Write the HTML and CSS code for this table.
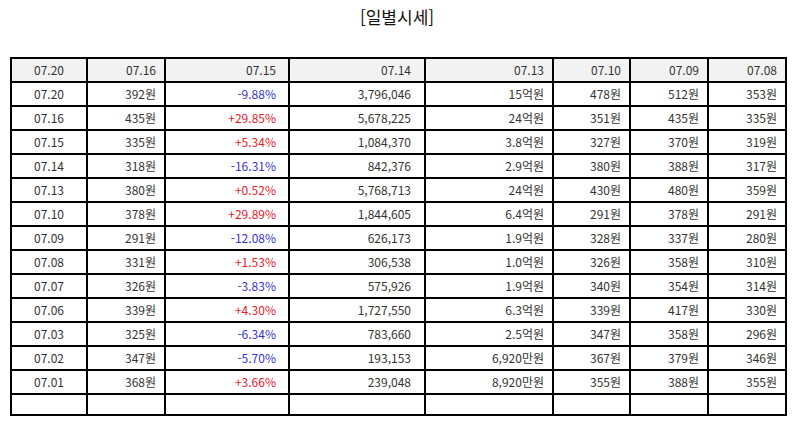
FILE: index.html
```html
<!DOCTYPE html>
<html lang="ko">
<head>
<meta charset="utf-8">
<link rel="stylesheet" href="styles.css">
</head>
<body>
<h2 class="title">[일별시세]</h2>
<table class="grid">
  <colgroup>
    <col class="c1"><col class="c2"><col class="c3"><col class="c4"><col class="c5"><col class="c6"><col class="c7"><col class="c8">
  </colgroup>
  <thead>
    <tr><th>07.20</th><th>07.16</th><th>07.15</th><th>07.14</th><th>07.13</th><th>07.10</th><th>07.09</th><th>07.08</th></tr>
  </thead>
  <tbody>
    <tr><td>07.20</td><td>392원</td><td class="dn">-9.88%</td><td>3,796,046</td><td>15억원</td><td>478원</td><td>512원</td><td>353원</td></tr>
    <tr><td>07.16</td><td>435원</td><td class="up">+29.85%</td><td>5,678,225</td><td>24억원</td><td>351원</td><td>435원</td><td>335원</td></tr>
    <tr><td>07.15</td><td>335원</td><td class="up">+5.34%</td><td>1,084,370</td><td>3.8억원</td><td>327원</td><td>370원</td><td>319원</td></tr>
    <tr><td>07.14</td><td>318원</td><td class="dn">-16.31%</td><td>842,376</td><td>2.9억원</td><td>380원</td><td>388원</td><td>317원</td></tr>
    <tr><td>07.13</td><td>380원</td><td class="up">+0.52%</td><td>5,768,713</td><td>24억원</td><td>430원</td><td>480원</td><td>359원</td></tr>
    <tr><td>07.10</td><td>378원</td><td class="up">+29.89%</td><td>1,844,605</td><td>6.4억원</td><td>291원</td><td>378원</td><td>291원</td></tr>
    <tr><td>07.09</td><td>291원</td><td class="dn">-12.08%</td><td>626,173</td><td>1.9억원</td><td>328원</td><td>337원</td><td>280원</td></tr>
    <tr><td>07.08</td><td>331원</td><td class="up">+1.53%</td><td>306,538</td><td>1.0억원</td><td>326원</td><td>358원</td><td>310원</td></tr>
    <tr><td>07.07</td><td>326원</td><td class="dn">-3.83%</td><td>575,926</td><td>1.9억원</td><td>340원</td><td>354원</td><td>314원</td></tr>
    <tr><td>07.06</td><td>339원</td><td class="up">+4.30%</td><td>1,727,550</td><td>6.3억원</td><td>339원</td><td>417원</td><td>330원</td></tr>
    <tr><td>07.03</td><td>325원</td><td class="dn">-6.34%</td><td>783,660</td><td>2.5억원</td><td>347원</td><td>358원</td><td>296원</td></tr>
    <tr><td>07.02</td><td>347원</td><td class="dn">-5.70%</td><td>193,153</td><td>6,920만원</td><td>367원</td><td>379원</td><td>346원</td></tr>
    <tr><td>07.01</td><td>368원</td><td class="up">+3.66%</td><td>239,048</td><td>8,920만원</td><td>355원</td><td>388원</td><td>355원</td></tr>
    <tr class="empty"><td></td><td></td><td></td><td></td><td></td><td></td><td></td><td></td></tr>
  </tbody>
</table>
</body>
</html>
```

FILE: styles.css
```css
html, body {
  margin: 0;
  padding: 0;
  background: #fff;
}
body {
  font-family: "Noto Sans CJK KR", "Noto Sans", sans-serif;
  color: #333;
}
.title {
  margin: 0;
  padding-top: 6px;
  height: 57px;
  box-sizing: border-box;
  text-align: center;
  font-size: 17px;
  font-weight: normal;
  line-height: 22px;
  color: #111;
}
.grid {
  margin-left: 10px;
  width: 776px;
  table-layout: fixed;
  border-collapse: separate;
  border-spacing: 0;
  border: 1px solid #000;
  font-size: 12px;
}
.c1 { width: 76px; }
.c2 { width: 78px; }
.c3 { width: 124px; }
.c4 { width: 136px; }
.c5 { width: 128px; }
.c6 { width: 77px; }
.c7 { width: 78px; }
.c8 { width: 78px; }
.grid th, .grid td {
  border: 1px solid #000;
  height: 22px;
  padding: 0 8px 0 0;
  text-align: right;
  font-weight: normal;
  line-height: 14px;
  white-space: nowrap;
  color: #333;
}
.grid th {
  background: #f2f2f2;
}
.grid th:first-child, .grid td:first-child {
  text-align: center;
  padding: 0;
}
.grid td:nth-child(3), .grid th:nth-child(3) { padding-right: 12px; }
.grid td:nth-child(4), .grid th:nth-child(4) { padding-right: 13px; }
.grid .up { color: #e8202a; }
.grid .dn { color: #3535c8; }
.grid .empty td { height: 19px; }
```
